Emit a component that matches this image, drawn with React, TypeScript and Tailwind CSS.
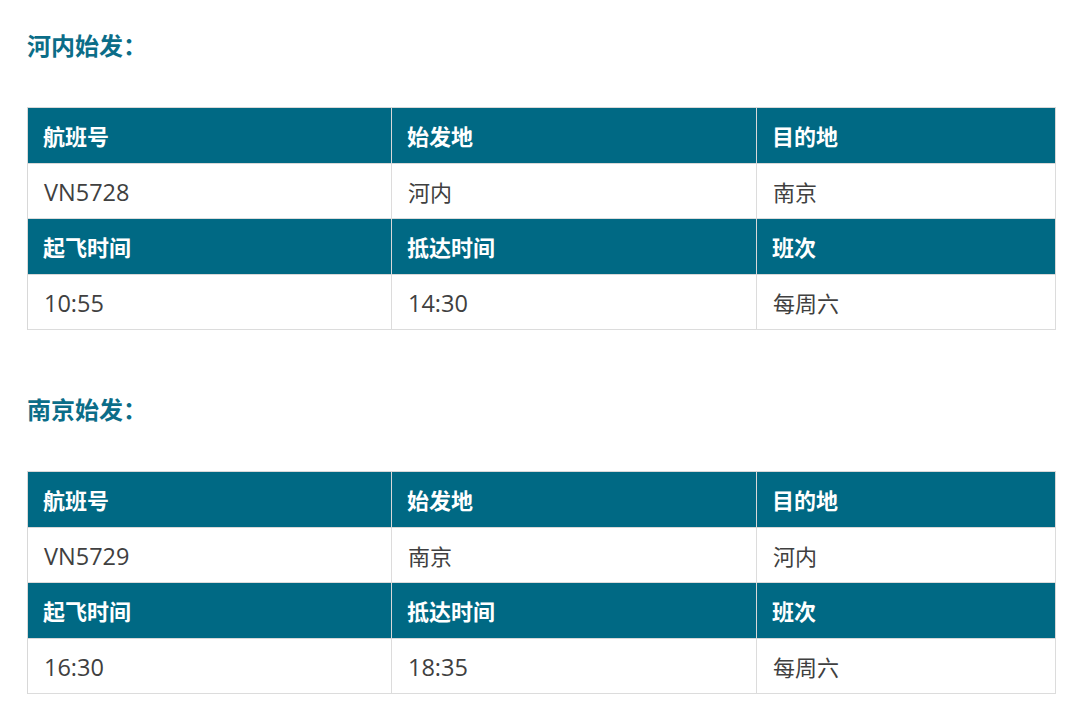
const font = { fontFamily: '"Open Sans", "Noto Sans CJK SC", sans-serif' }

interface Flight {
  title: string
  no: string
  from: string
  to: string
  dep: string
  arr: string
  freq: string
}

const FLIGHTS: Flight[] = [
  { title: '河内始发：', no: 'VN5728', from: '河内', to: '南京', dep: '10:55', arr: '14:30', freq: '每周六' },
  { title: '南京始发：', no: 'VN5729', from: '南京', to: '河内', dep: '16:30', arr: '18:35', freq: '每周六' },
]

function HeadCell({ text }: { text: string }) {
  return (
    <div className="h-[55.5px] flex items-center pl-[15px] pt-[3px] bg-[#006984] text-white font-bold text-[22px] border-r border-b border-[#d8d8d8]">
      {text}
    </div>
  )
}

// latin text (flight no, times) renders a bit larger than the CJK cells
function DataCell({ text, latin }: { text: string; latin?: boolean }) {
  return (
    <div
      className={`h-[55.5px] flex items-center pl-[16px] pt-[3px] bg-white text-[#404040] border-r border-b border-[#dcdcdc] ${
        latin ? 'text-[23.5px]' : 'text-[22px]'
      }`}
    >
      {text}
    </div>
  )
}

function FlightTable({ f }: { f: Flight }) {
  return (
    <div className="grid grid-cols-[364px_365px_299px] border-l border-t border-[#d8d8d8] w-[1029px]">
      <HeadCell text="航班号" />
      <HeadCell text="始发地" />
      <HeadCell text="目的地" />
      <DataCell text={f.no} latin />
      <DataCell text={f.from} />
      <DataCell text={f.to} />
      <HeadCell text="起飞时间" />
      <HeadCell text="抵达时间" />
      <HeadCell text="班次" />
      <DataCell text={f.dep} latin />
      <DataCell text={f.arr} latin />
      <DataCell text={f.freq} />
    </div>
  )
}

export default function App() {
  return (
    <div className="w-[1080px] h-[724px] bg-white pl-[27px] pt-[31px]" style={font}>
      {FLIGHTS.map((f, i) => (
        <div key={f.no} className={i > 0 ? 'mt-[65px]' : ''}>
          <h2 className="text-[24px] leading-[30px] font-bold text-[#0b6d88] mb-[46px]">{f.title}</h2>
          <FlightTable f={f} />
        </div>
      ))}
    </div>
  )
}
